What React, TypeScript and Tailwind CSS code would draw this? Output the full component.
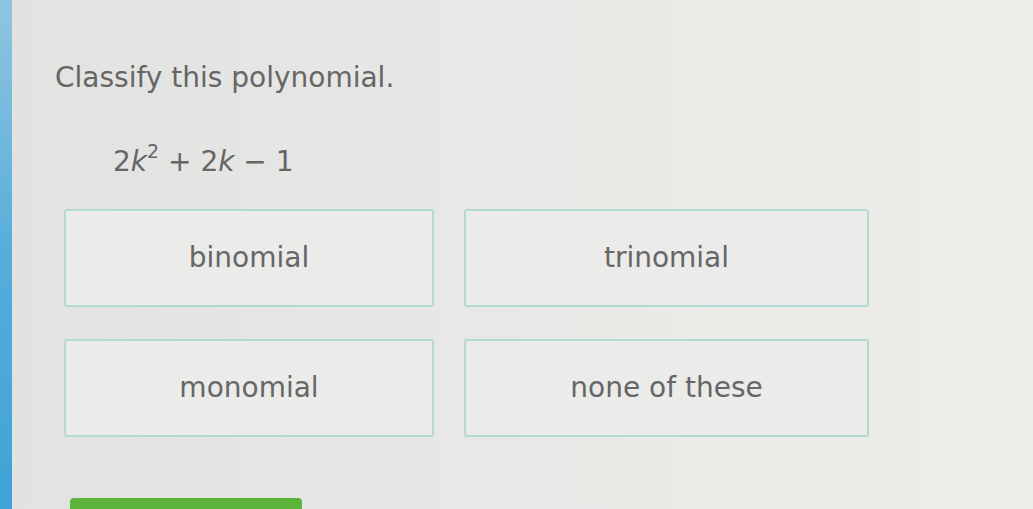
import React from "react";

const OPTIONS = ["binomial", "trinomial", "monomial", "none of these"];

export default function App() {
  return (
    <div
      className="flex h-[509px] w-[1033px] overflow-hidden bg-gradient-to-r from-[#e2e2e0] via-[#e8e8e6] to-[#eeede9] text-[#666666]"
      style={{ fontFamily: '"DejaVu Sans", Verdana, sans-serif' }}
    >
      {/* left accent strip */}
      <div className="w-[12px] shrink-0 bg-gradient-to-b from-[#8fc5e0] via-[#55addb] to-[#3fa3d6]" />

      <div className="flex flex-1 flex-col pl-[43px] pt-[60px]">
        <h1 className="text-[28px] leading-[36px]">Classify this polynomial.</h1>

        <div className="ml-[58px] mt-[50px] h-[32px] text-[28px] leading-[32px]">
          2<i>k</i>
          <sup className="-top-[0.7em] text-[19px]">2</sup> + 2<i>k</i> − 1
        </div>

        <div className="ml-[9px] mt-[31px] grid grid-cols-[370px_405px] gap-x-[30px] gap-y-[32px]">
          {OPTIONS.map((o) => (
            <button
              key={o}
              className="flex h-[98px] items-center justify-center rounded-[3px] border-2 border-[#b2d9d2] bg-[#ebebe9] text-[28px] text-[#666666]"
            >
              {o}
            </button>
          ))}
        </div>

        {/* submit button, cut off at the bottom */}
        <div className="ml-[15px] mt-[61px] h-[20px] w-[232px] rounded-t-[4px] bg-[#5cb43a]" />
      </div>
    </div>
  );
}
